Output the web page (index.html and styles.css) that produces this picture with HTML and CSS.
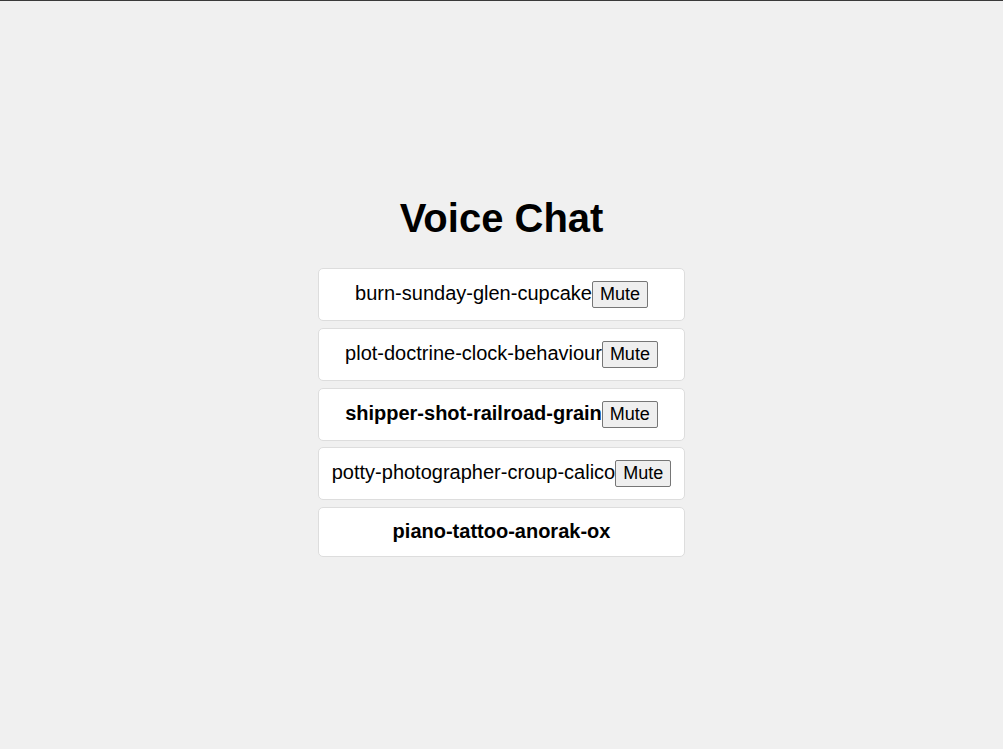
FILE: index.html
```html
<!DOCTYPE html>
<html lang="en">
<head>
    <meta charset="UTF-8">
    <meta name="viewport" content="width=device-width, initial-scale=1.0">
    <title>Voice Chat</title>
    <link rel="stylesheet" href="styles.css">
</head>
<body>
    <div class="container">
        <h1>Voice Chat</h1>
        <ul class="peers">
            <li class="peer"><span class="name">burn-sunday-glen-cupcake</span><button class="mute">Mute</button></li>
            <li class="peer"><span class="name">plot-doctrine-clock-behaviour</span><button class="mute">Mute</button></li>
            <li class="peer speaking"><span class="name">shipper-shot-railroad-grain</span><button class="mute">Mute</button></li>
            <li class="peer"><span class="name">potty-photographer-croup-calico</span><button class="mute">Mute</button></li>
            <li class="peer speaking"><span class="name">piano-tattoo-anorak-ox</span></li>
        </ul>
    </div>
</body>
</html>
```

FILE: styles.css
```css
body {
    font-family: "Liberation Sans", Arial, sans-serif;
    margin: 0;
    padding: 0;
    background-color: #f0f0f0;
    border-top: 1px solid #3a3a3a;
    min-height: 100vh;
    box-sizing: border-box;
}

.container {
    display: flex;
    flex-direction: column;
    align-items: center;
    padding-top: 195px;
}

h1 {
    font-size: 40px;
    margin: 0 0 27px;
    color: #000;
}

.peers {
    list-style: none;
    margin: 0;
    padding: 0;
    width: 367px;
}

.peer {
    box-sizing: border-box;
    min-height: 50px;
    background-color: #fff;
    border: 1px solid #ddd;
    border-radius: 5px;
    padding: 12px;
    margin-bottom: 6.75px;
    text-align: center;
    font-size: 20px;
    color: #000;
}

.speaking {
    font-weight: bold;
}

.mute {
    font-family: "Liberation Sans", Arial, sans-serif;
    font-size: 18px;
    font-weight: normal;
    padding: 2px 7px;
    color: #000;
    background-color: #efefef;
    border: 1px solid #767676;
    border-radius: 2px;
    cursor: pointer;
}
```
